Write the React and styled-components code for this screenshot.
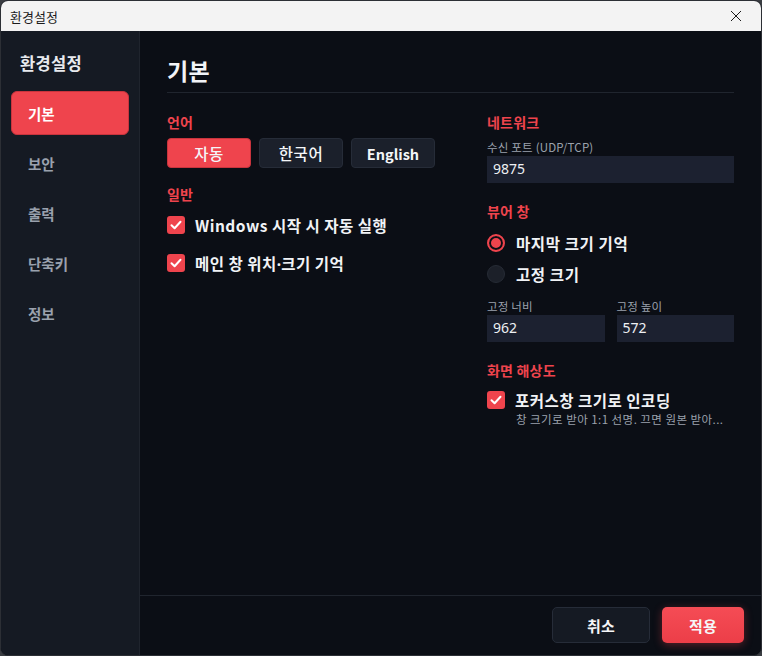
import React, { useState } from "react";
import styled, { createGlobalStyle, css } from "styled-components";

const red = "#ef444d";

const GlobalStyle = createGlobalStyle`
  html, body {
    margin: 0;
    padding: 0;
    background: #3a3d42;
  }
  body {
    font-family: "Noto Sans CJK KR", "Noto Sans", sans-serif;
    -webkit-font-smoothing: antialiased;
  }
  * { box-sizing: border-box; }
`;

const Window = styled.div`
  width: 762px;
  height: 656px;
  display: flex;
  flex-direction: column;
  border: 1px solid #2c2f35;
  border-radius: 8px;
  overflow: hidden;
  background: #0b0e15;
`;

const TitleBar = styled.div`
  height: 30px;
  flex-shrink: 0;
  display: flex;
  align-items: center;
  justify-content: space-between;
  background: #f3f3f3;
  padding: 0 0 0 9px;
  font-size: 13px;
  color: #1b1b1b;
`;

const CloseButton = styled.button`
  width: 46px;
  height: 30px;
  border: none;
  background: transparent;
  display: flex;
  align-items: center;
  justify-content: center;
  padding: 0;
  margin-right: 2px;
`;

const Body = styled.div`
  flex: 1;
  display: flex;
  min-height: 0;
`;

const Sidebar = styled.nav`
  width: 139px;
  flex-shrink: 0;
  background: #151a23;
  border-right: 1px solid #1f242d;
  padding: 21px 10px 0 10px;
  display: flex;
  flex-direction: column;
`;

const SidebarTitle = styled.div`
  height: 22px;
  line-height: 22px;
  margin-left: 9px;
  font-size: 16.5px;
  letter-spacing: 0.3px;
  font-weight: 700;
  color: #e8eaee;
`;

const NavList = styled.div`
  margin-top: 17px;
  display: flex;
  flex-direction: column;
  gap: 6px;
`;

const NavItem = styled.div`
  height: 44px;
  display: flex;
  align-items: center;
  padding-left: 17px;
  border-radius: 6px;
  font-size: 14.5px;
  font-weight: 700;
  color: #9aa1ad;
  ${(p) =>
    p.$active &&
    css`
      background: ${red};
      color: #ffffff;
      border: 1px solid #c9343d;
      padding-left: 16px;
    `}
`;

const Main = styled.main`
  flex: 1;
  display: flex;
  flex-direction: column;
  min-width: 0;
`;

const Content = styled.div`
  flex: 1;
  padding: 22px 27px 0 27px;
`;

const PageTitle = styled.h1`
  margin: 0;
  height: 40px;
  line-height: 34px;
  font-size: 23px;
  letter-spacing: 0.3px;
  font-weight: 700;
  color: #f2f4f7;
  border-bottom: 1px solid #20252e;
`;

const Columns = styled.div`
  display: grid;
  grid-template-columns: 300px 1fr;
  column-gap: 20px;
`;

const Column = styled.div`
  display: flex;
  flex-direction: column;
`;

const SectionLabel = styled.div`
  margin-top: ${(p) => p.$top}px;
  height: 18px;
  line-height: 18px;
  font-size: 14px;
  letter-spacing: 0.2px;
  font-weight: 700;
  color: ${red};
`;

const SegmentRow = styled.div`
  margin-top: 7px;
  display: flex;
  gap: 8px;
`;

const Segment = styled.button`
  width: 84px;
  height: 30px;
  border-radius: 4px;
  border: 1px solid ${(p) => (p.$active ? "#c9343d" : "#262c38")};
  background: ${(p) => (p.$active ? red : "#1b202b")};
  color: #f4f6f8;
  font-family: inherit;
  font-size: ${(p) => (p.$latin ? 14.5 : 15.5)}px;
  letter-spacing: ${(p) => (p.$latin ? 0 : 0.5)}px;
  font-weight: ${(p) => (p.$latin ? 700 : 500)};
  padding: 0;
`;

const CheckRow = styled.label`
  display: flex;
  align-items: center;
  gap: 10px;
  height: ${(p) => p.$h || 38}px;
  margin-top: ${(p) => p.$top || 0}px;
  font-size: 15.5px;
  letter-spacing: 0.5px;
  font-weight: 700;
  color: #f1f3f6;
`;

const Dot = styled.span`
  font-family: "Noto Sans", sans-serif;
  letter-spacing: 0;
`;

const CheckBox = styled.span`
  width: 18px;
  height: 18px;
  border-radius: 3px;
  background: ${red};
  display: flex;
  align-items: center;
  justify-content: center;
  flex-shrink: 0;
`;

const RadioRow = styled.label`
  display: flex;
  align-items: center;
  gap: 11px;
  height: 31px;
  font-size: 15.5px;
  letter-spacing: 0.6px;
  font-weight: 700;
  color: #f1f3f6;
`;

const RadioDot = styled.span`
  width: 18px;
  height: 18px;
  border-radius: 50%;
  flex-shrink: 0;
  ${(p) =>
    p.$checked
      ? css`
          border: 2px solid ${red};
          background: #0b0e15;
          box-shadow: inset 0 0 0 2px #0b0e15, inset 0 0 0 10px ${red};
        `
      : css`
          border: 1px solid #262b35;
          background: #1c2029;
        `}
`;

const FieldLabel = styled.div`
  margin-top: ${(p) => p.$top || 0}px;
  height: 14px;
  line-height: 14px;
  font-size: 11.5px;
  letter-spacing: 0.2px;
  color: #9ba2ad;
`;

const Input = styled.input`
  margin-top: 2px;
  width: 100%;
  height: 27px;
  border: none;
  outline: none;
  background: #1c2130;
  color: #eef0f3;
  font-family: "Noto Sans", sans-serif;
  font-size: 14px;
  padding: 0 6px 2px;
`;

const FieldGrid = styled.div`
  margin-top: 10px;
  display: grid;
  grid-template-columns: 1fr 1fr;
  column-gap: 12px;
`;

const Hint = styled.div`
  margin-top: 1px;
  padding-left: 29px;
  font-size: 11.5px;
  letter-spacing: 0.45px;
  line-height: 14px;
  color: #9ba2ad;
  white-space: nowrap;
`;

const Footer = styled.footer`
  height: 60px;
  flex-shrink: 0;
  border-top: 1px solid #20252e;
  display: flex;
  justify-content: flex-end;
  align-items: flex-start;
  gap: 12px;
  padding: 11px 17px 0 0;
`;

const FooterButton = styled.button`
  height: 36px;
  width: ${(p) => p.$w}px;
  border-radius: 5px;
  font-family: inherit;
  font-size: 15px;
  letter-spacing: 0.3px;
  font-weight: 700;
  color: #f5f6f8;
  padding: 0;
  ${(p) =>
    p.$primary
      ? css`
          border: none;
          background: linear-gradient(#f54c55, #ec3e48);
          box-shadow: 0 2px 8px rgba(239, 68, 77, 0.35);
        `
      : css`
          border: 1px solid #262c38;
          background: #151a23;
        `}
`;

const Check = () => (
  <CheckBox>
    <svg width="12" height="10" viewBox="0 0 12 10">
      <path d="M1.5 5.2 L4.6 8.2 L10.5 1.8" fill="none" stroke="#fff" strokeWidth="2" strokeLinecap="round" strokeLinejoin="round" />
    </svg>
  </CheckBox>
);

const navItems = ["기본", "보안", "출력", "단축키", "정보"];
const langs = ["자동", "한국어", "English"];

export default function App() {
  const [lang, setLang] = useState("자동");
  const [viewer, setViewer] = useState("last");

  return (
    <>
      <GlobalStyle />
      <Window>
        <TitleBar>
          <span>환경설정</span>
          <CloseButton>
            <svg width="12" height="12" viewBox="0 0 12 12">
              <path d="M1 1 L11 11 M11 1 L1 11" stroke="#1b1b1b" strokeWidth="1" />
            </svg>
          </CloseButton>
        </TitleBar>
        <Body>
          <Sidebar>
            <SidebarTitle>환경설정</SidebarTitle>
            <NavList>
              {navItems.map((item) => (
                <NavItem key={item} $active={item === "기본"}>
                  {item}
                </NavItem>
              ))}
            </NavList>
          </Sidebar>
          <Main>
            <Content>
              <PageTitle>기본</PageTitle>
              <Columns>
                <Column>
                  <SectionLabel $top={20}>언어</SectionLabel>
                  <SegmentRow>
                    {langs.map((l) => (
                      <Segment key={l} $active={lang === l} $latin={l === "English"} onClick={() => setLang(l)}>
                        {l}
                      </Segment>
                    ))}
                  </SegmentRow>
                  <SectionLabel $top={17}>일반</SectionLabel>
                  <CheckRow $top={3}>
                    <Check />
                    Windows 시작 시 자동 실행
                  </CheckRow>
                  <CheckRow>
                    <Check />
                    <span>
                      메인 창 위치<Dot>·</Dot>크기 기억
                    </span>
                  </CheckRow>
                </Column>
                <Column>
                  <SectionLabel $top={20}>네트워크</SectionLabel>
                  <FieldLabel $top={9}>수신 포트 (UDP/TCP)</FieldLabel>
                  <Input defaultValue="9875" />
                  <SectionLabel $top={19}>뷰어 창</SectionLabel>
                  <div style={{ marginTop: 7 }} />
                  <RadioRow onClick={() => setViewer("last")}>
                    <RadioDot $checked={viewer === "last"} />
                    마지막 크기 기억
                  </RadioRow>
                  <RadioRow onClick={() => setViewer("fixed")}>
                    <RadioDot $checked={viewer === "fixed"} />
                    고정 크기
                  </RadioRow>
                  <FieldGrid>
                    <div>
                      <FieldLabel>고정 너비</FieldLabel>
                      <Input defaultValue="962" />
                    </div>
                    <div>
                      <FieldLabel>고정 높이</FieldLabel>
                      <Input defaultValue="572" />
                    </div>
                  </FieldGrid>
                  <SectionLabel $top={19}>화면 해상도</SectionLabel>
                  <CheckRow $top={10} $h={22}>
                    <Check />
                    포커스창 크기로 인코딩
                  </CheckRow>
                  <Hint>창 크기로 받아 1:1 선명. 끄면 원본 받아...</Hint>
                </Column>
              </Columns>
            </Content>
            <Footer>
              <FooterButton $w={98}>취소</FooterButton>
              <FooterButton $w={82} $primary>
                적용
              </FooterButton>
            </Footer>
          </Main>
        </Body>
      </Window>
    </>
  );
}
